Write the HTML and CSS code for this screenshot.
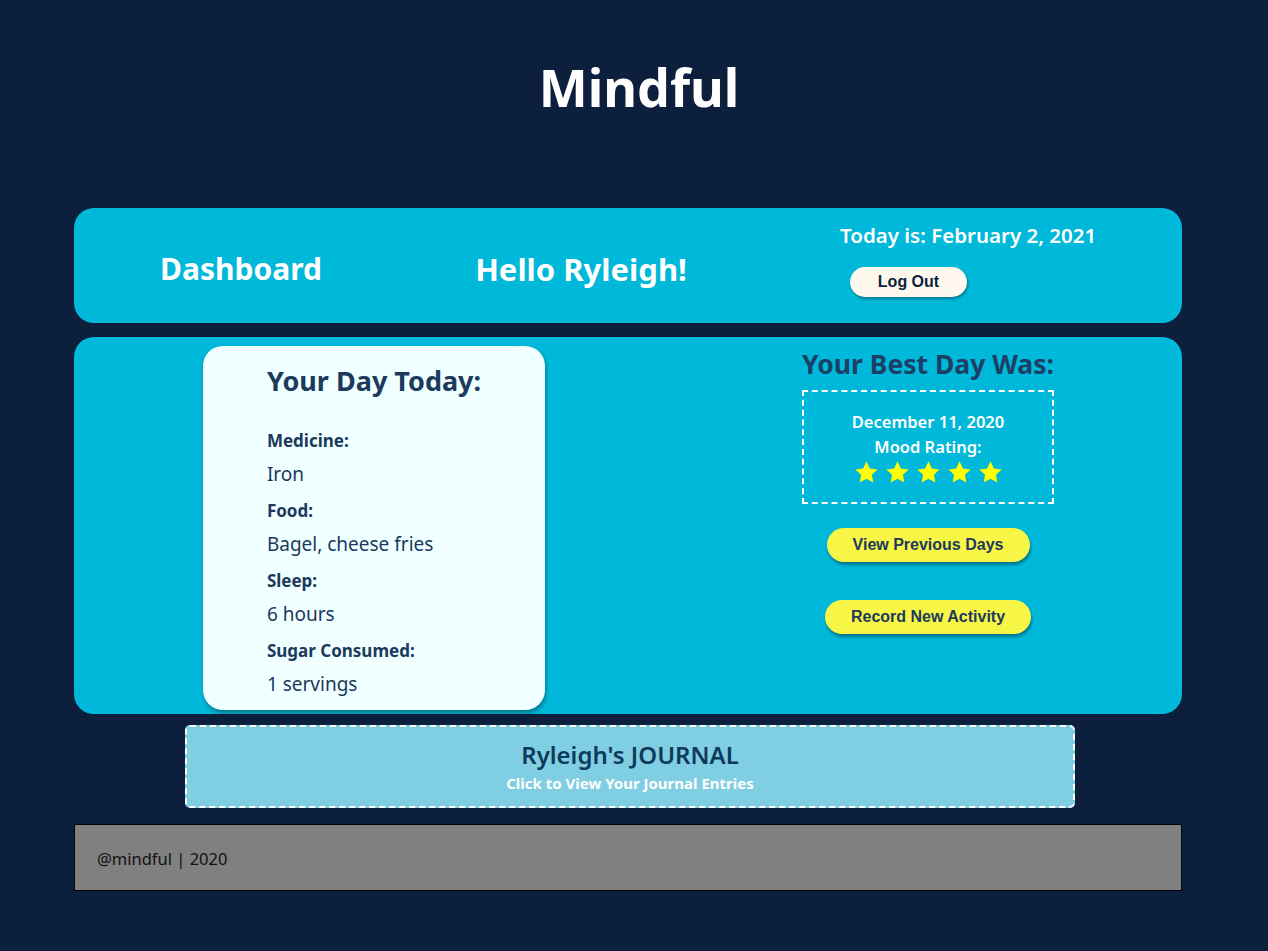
FILE: index.html
```html
<!DOCTYPE html>
<html lang="en">
<head>
<meta charset="utf-8">
<title>Mindful</title>
<link rel="stylesheet" href="styles.css">
</head>
<body>
<h1 class="site-title">Mindful</h1>

<header class="top-bar">
  <div class="top-col top-col--dash"><h2 class="top-heading">Dashboard</h2></div>
  <div class="top-col top-col--hello"><h2 class="top-heading">Hello Ryleigh!</h2></div>
  <div class="top-col top-col--date">
    <p class="today">Today is: February 2, 2021</p>
    <button class="logout-btn">Log Out</button>
  </div>
</header>

<main class="main-card">
  <section class="day-card">
    <div class="day-inner">
      <h3 class="day-title">Your Day Today:</h3>
      <p class="day-label">Medicine:</p>
      <p class="day-value">Iron</p>
      <p class="day-label">Food:</p>
      <p class="day-value">Bagel, cheese fries</p>
      <p class="day-label">Sleep:</p>
      <p class="day-value">6 hours</p>
      <p class="day-label">Sugar Consumed:</p>
      <p class="day-value">1 servings</p>
    </div>
  </section>
  <section class="best-col">
    <div class="best-inner">
      <h3 class="best-title">Your Best Day Was:</h3>
      <div class="best-box">
        <p class="best-date">December 11, 2020</p>
        <p class="best-mood">Mood Rating:</p>
        <div class="stars">
          <svg class="star" viewBox="0 0 24 24"><path d="M12 1.2l3.2 6.9 7.5.9-5.5 5.2 1.4 7.4L12 17.9l-6.6 3.7 1.4-7.4L1.3 9l7.5-.9z"/></svg>
          <svg class="star" viewBox="0 0 24 24"><path d="M12 1.2l3.2 6.9 7.5.9-5.5 5.2 1.4 7.4L12 17.9l-6.6 3.7 1.4-7.4L1.3 9l7.5-.9z"/></svg>
          <svg class="star" viewBox="0 0 24 24"><path d="M12 1.2l3.2 6.9 7.5.9-5.5 5.2 1.4 7.4L12 17.9l-6.6 3.7 1.4-7.4L1.3 9l7.5-.9z"/></svg>
          <svg class="star" viewBox="0 0 24 24"><path d="M12 1.2l3.2 6.9 7.5.9-5.5 5.2 1.4 7.4L12 17.9l-6.6 3.7 1.4-7.4L1.3 9l7.5-.9z"/></svg>
          <svg class="star" viewBox="0 0 24 24"><path d="M12 1.2l3.2 6.9 7.5.9-5.5 5.2 1.4 7.4L12 17.9l-6.6 3.7 1.4-7.4L1.3 9l7.5-.9z"/></svg>
        </div>
      </div>
    </div>
    <button class="yellow-btn yellow-btn--view">View Previous Days</button>
    <button class="yellow-btn yellow-btn--record">Record New Activity</button>
  </section>
</main>

<a class="journal" href="#">
  <span class="journal-title">Ryleigh's JOURNAL</span>
  <span class="journal-sub">Click to View Your Journal Entries</span>
</a>

<footer class="footer">@mindful | 2020</footer>
</body>
</html>
```

FILE: styles.css
```css
* { box-sizing: border-box; }

body {
  margin: 0;
  background: #0c1f3c;
  font-family: "Noto Sans", "Open Sans", sans-serif;
  color: #fff;
}

p, h1, h2, h3 { margin: 0; }

.site-title {
  text-align: center;
  font-size: 52px;
  font-weight: 700;
  line-height: 1.2;
  padding: 56px 0 0 10px;
  height: 208px;
  color: #fff;
}

.top-bar {
  margin-left: 74px;
  width: 1108px;
  height: 115px;
  background: #00b8d9;
  border-radius: 20px;
  display: flex;
  align-items: center;
}

.top-col--dash { width: 334px; text-align: center; padding-top: 6px; }
.top-col--hello { width: 346px; text-align: center; padding-top: 6px; }
.top-col--date {
  padding-left: 86px;
  align-self: flex-start;
  padding-top: 12px;
}

.top-heading {
  font-size: 30px;
  font-weight: 700;
  color: #fff;
}

.top-col--hello .top-heading { font-size: 31px; }

.today {
  font-size: 20.5px;
  font-weight: 600;
  line-height: 30px;
}

.logout-btn {
  margin-top: 17px;
  margin-left: 10px;
  width: 117px;
  height: 30px;
  border: none;
  border-radius: 15px;
  background: #fff8ee;
  font-family: "Liberation Sans", Arial, sans-serif;
  font-weight: 700;
  font-size: 16px;
  color: #0c1f3c;
  box-shadow: 1px 2px 3px rgba(0,0,0,0.35);
}

.main-card {
  margin: 14px 0 0 74px;
  width: 1108px;
  height: 377px;
  background: #00b8d9;
  border-radius: 20px;
  display: flex;
  align-items: flex-start;
  padding: 9px 0 0 129px;
  gap: 129px;
}

.day-card {
  width: 342px;
  height: 364px;
  background: #f0ffff;
  border-radius: 20px;
  box-shadow: 1px 3px 4px rgba(0,0,0,0.35);
  display: flex;
  justify-content: center;
  padding-top: 18px;
}

.day-inner {
  width: fit-content;
  color: #1b3a5c;
}

.day-title {
  font-size: 27px;
  font-weight: 700;
  line-height: 34px;
  margin-bottom: 31px;
}

.day-label {
  font-size: 17px;
  font-weight: 700;
  line-height: 24px;
  border-bottom: 1px solid #ffffff;
}

.day-value {
  font-size: 19px;
  line-height: 24px;
  margin: 8px 0 13px;
}

.best-col {
  flex: 1;
  display: flex;
  flex-direction: column;
  align-items: center;
  padding-top: 2px;
}

.best-inner { width: fit-content; }

.best-title {
  font-size: 26.5px;
  font-weight: 700;
  line-height: 32px;
  color: #1c3f66;
  text-align: center;
}

.best-box {
  margin-top: 10px;
  height: 114px;
  border: 2px dashed #fff;
  text-align: center;
  padding-top: 17px;
}

.best-date, .best-mood {
  font-size: 16.5px;
  font-weight: 600;
  line-height: 25px;
}

.stars {
  display: flex;
  justify-content: center;
  gap: 6px;
  margin-top: 1px;
}

.star {
  width: 25px;
  height: 25px;
  fill: #ffff00;
}

.yellow-btn {
  height: 34px;
  border: none;
  border-radius: 17px;
  background: #f7f545;
  font-family: "Liberation Sans", Arial, sans-serif;
  font-weight: 700;
  font-size: 16px;
  color: #1c3a5c;
  box-shadow: 1px 3px 3px rgba(0,0,0,0.35);
}

.yellow-btn--view { width: 203px; margin-top: 24px; }
.yellow-btn--record { width: 206px; margin-top: 38px; }

.journal {
  display: flex;
  flex-direction: column;
  align-items: center;
  margin: 11px 0 0 185px;
  width: 890px;
  height: 83px;
  background: #80cee1;
  border: 2px dashed #fff;
  border-radius: 5px;
  text-decoration: none;
  padding-top: 11px;
}

.journal-title {
  font-size: 24px;
  font-weight: 600;
  line-height: 34px;
  color: #0d3a5c;
}

.journal-sub {
  font-size: 15px;
  font-weight: 700;
  line-height: 22px;
  color: #fff;
}

.footer {
  margin: 16px 0 0 74px;
  width: 1108px;
  height: 67px;
  background: #808080;
  border: 1px solid #000;
  color: #111;
  font-size: 16.5px;
  padding: 22px 0 0 22px;
}
```
